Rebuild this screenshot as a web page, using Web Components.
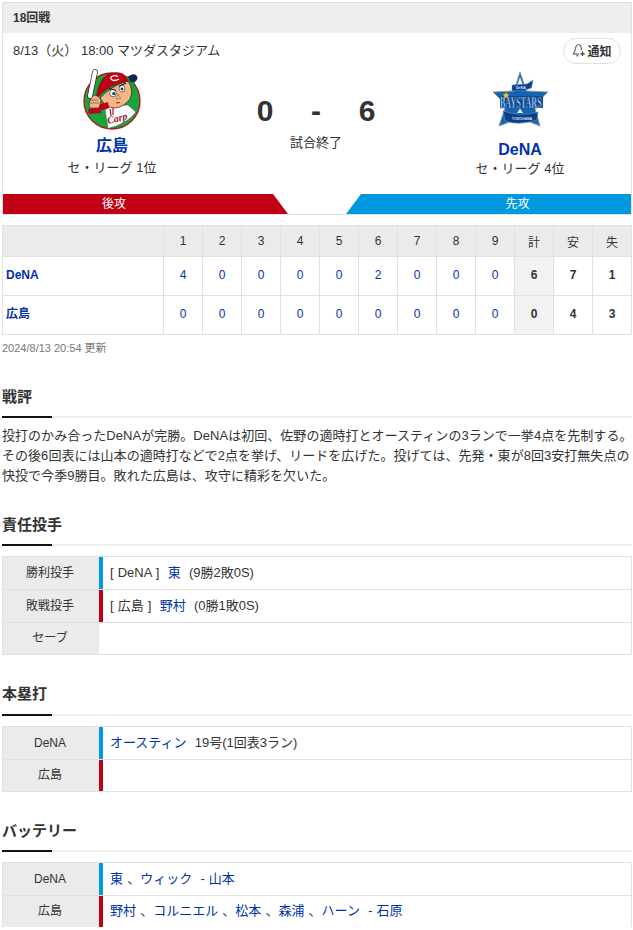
<!DOCTYPE html>
<html lang="ja">
<head>
<meta charset="utf-8">
<title>18回戦</title>
<style>
  html, body { margin: 0; padding: 0; background: #fff; }
  body {
    width: 633px;
    font-family: "Liberation Sans", Arial, "Noto Sans CJK JP", sans-serif;
    color: #333;
  }
  a { color: #0033aa; text-decoration: none; }
</style>
</head>
<body>

<game-card round="18回戦" info="8/13（火） 18:00 マツダスタジアム" status="試合終了" home-score="0" away-score="6">
  <team-side slot="home" name="広島" rank="セ・リーグ 1位">
    <svg slot="logo" width="62" height="62" viewBox="0 0 62 62">
      <circle cx="31" cy="32" r="28" fill="#14a53c" stroke="#b5121b" stroke-width="1.3"/>
      <path d="M24 41 L30 37 L47 36 L55 43 Q46 55 27 59.5 Z" fill="#fff" stroke="#444" stroke-width=".5"/>
      <path d="M29 40 L30 47 M32 39 V46" stroke="#b5121b" stroke-width="1.2" fill="none"/>
      <text transform="translate(27 55) rotate(-14)" font-size="10" font-style="italic" font-weight="bold" fill="#8e1119" font-family="Liberation Serif, serif">Carp</text>
      <path d="M43 9 L48 7 L54 11 L53 17 L48 19 L44 15 Z" fill="#14a53c" stroke="#0c6a27" stroke-width=".4"/>
      <path d="M47 8 Q51 4 55 6 Q58 9 55 12 Q52 14 49 13 Q48 10 47 8 Z" fill="#10234a"/>
      <path d="M19 29 Q30 17 47 12 Q53 21 49 30 Q42 39 33 39 Q24 38 19 29 Z" fill="#f6b587" stroke="#222" stroke-width=".7"/>
      <path d="M15 30 Q17 12 26 6 Q36 2 42 5 Q46 8 47 12 Q36 14 29 18 Q20 24 15 30 Z" fill="#c00014" stroke="#7d0b12" stroke-width=".6"/>
      <path d="M37 7.5 Q33 5.5 30 8 Q29 11 33 11.5 Q36 11.5 38 10" fill="none" stroke="#fff" stroke-width="1.3"/>
      <ellipse cx="32" cy="24" rx="3.3" ry="3.8" fill="#fff" stroke="#222" stroke-width=".6"/>
      <ellipse cx="41" cy="19.5" rx="2.9" ry="3.5" fill="#fff" stroke="#222" stroke-width=".6"/>
      <circle cx="32.8" cy="24.5" r="1.6" fill="#18336b"/>
      <circle cx="41" cy="20" r="1.4" fill="#18336b"/>
      <path d="M28 19.5 L35 21.5 M38 17.5 L45 14" stroke="#222" stroke-width="1.1"/>
      <path d="M37 25 L39.5 29.5 L35.5 30 Z" fill="#fbd6b5" stroke="#222" stroke-width=".4"/>
      <path d="M35 34 L39 33.5" stroke="#b5121b" stroke-width="1"/>
      <path d="M17 36 L27 33 L28 39 L18 42 Z" fill="#c00014"/>
      <path d="M8 35 Q9 29 13 26 Q19 27 20 32 Q19 35 18 39 L9 39 Z" fill="#f6b587" stroke="#222" stroke-width=".6"/>
      <path d="M7 40 L19 39 L20 44 L8 45 Z" fill="#c00014"/>
      <path d="M14 3 L9 27" stroke="#222" stroke-width="5.6" stroke-linecap="round"/>
      <path d="M14 3 L9 27" stroke="#fff" stroke-width="4.2" stroke-linecap="round"/>
      <path d="M9 31 H17 M9 34 H18" stroke="#7a4a30" stroke-width=".7"/>
    </svg>
  </team-side>
  <team-side slot="away" name="DeNA" rank="セ・リーグ 4位" low>
    <svg slot="logo" width="60" height="62" viewBox="0 0 60 62">
      <path d="M30 3 L36.5 22 L58 23 L44 36 L50 57 L30 49 L9 57 L16 36 L3 23 L24 22 Z" fill="#1763b0" stroke="#8e99a4" stroke-width="1"/>
      <path d="M30 8 L33.5 18 H26.5 Z" fill="#e8f3fc"/>
      <path d="M22 16 L37 15 L43 11 L41.5 19 L35 21 L22 22 Z" fill="#0b3f86" stroke="#5a9ad8" stroke-width=".5"/>
      <text x="26" y="20.3" font-size="3.6" font-weight="bold" fill="#d5e7f8">DeNA</text>
      <path d="M10 27 H53 V39 H10 Z" fill="#0d4c97"/>
      <text transform="translate(10 38.5) scale(.474 1)" font-size="17" font-weight="bold" fill="#a9cff2" stroke="#0a3874" stroke-width=".4" font-family="Liberation Serif, serif">BAYSTARS</text>
      <path d="M16 23 L17 25.3 L19.5 25.5 L17.6 27 L18.3 29.5 L16 28.2 L13.7 29.5 L14.4 27 L12.5 25.5 L15 25.3 Z" fill="#f5c518"/>
      <path d="M27 44 L30 39.5 L33 44 Z" fill="#e8f3fc"/>
      <path d="M13 42 Q30 48 48 43 L47 51 Q30 57 15 52 Z" fill="#0b3f86" stroke="#5a9ad8" stroke-width=".6"/>
      <text x="22" y="50.5" font-size="3.4" font-weight="bold" fill="#cfe3f7">YOKOHAMA</text>
    </svg>
  </team-side>
</game-card>

<score-board></score-board>
<update-note>2024/8/13 20:54 更新</update-note>

<section-block title="戦評" body-gap="8" style="margin-top:32px">
  <p-text>投打のかみ合ったDeNAが完勝。DeNAは初回、佐野の適時打とオースティンの3ランで一挙4点を先制する。その後6回表には山本の適時打などで2点を挙げ、リードを広げた。投げては、先発・東が8回3安打無失点の快投で今季9勝目。敗れた広島は、攻守に精彩を欠いた。</p-text>
</section-block>

<section-block title="責任投手" style="margin-top:29px">
  <info-table>
    <info-row label="勝利投手" team="dena">[ DeNA ]&nbsp; <a href="#">東</a>&nbsp; (9勝2敗0S)</info-row>
    <info-row label="敗戦投手" team="carp">[ 広島 ]&nbsp; <a href="#">野村</a>&nbsp; (0勝1敗0S)</info-row>
    <info-row label="セーブ"></info-row>
  </info-table>
</section-block>

<section-block title="本塁打" style="margin-top:30px; --title-pad:10px">
  <info-table>
    <info-row label="DeNA" team="dena"><a href="#">オースティン</a>&nbsp; 19号(1回表3ラン)</info-row>
    <info-row label="広島" team="carp"></info-row>
  </info-table>
</section-block>

<section-block title="バッテリー" style="margin-top:30px">
  <info-table>
    <info-row label="DeNA" team="dena"><a href="#">東</a> 、<a href="#">ウィック</a> &nbsp;- <a href="#">山本</a></info-row>
    <info-row label="広島" team="carp"><a href="#">野村</a> 、<a href="#">コルニエル</a> 、<a href="#">松本</a> 、<a href="#">森浦</a> 、<a href="#">ハーン</a> &nbsp;- <a href="#">石原</a></info-row>
  </info-table>
</section-block>

<script>
class TeamSide extends HTMLElement {
  constructor() {
    super();
    this.attachShadow({ mode: "open" });
    const low = this.hasAttribute("low");
    this.shadowRoot.innerHTML = `
      <style>
        :host { display: flex; flex-direction: column; align-items: center; width: 200px; }
        .logo { height: 62px; display: flex; justify-content: center; }
        .name { font-size: 16px; font-weight: bold; color: #0033aa; line-height: 20px; margin-top: ${low ? 9 : 5}px; }
        .rank { font-size: 13px; line-height: 20px; margin-top: ${low ? -1 : 2}px; color: #333; }
      </style>
      <div class="logo"><slot name="logo"></slot></div>
      <div class="name">${this.getAttribute("name")}</div>
      <div class="rank">${this.getAttribute("rank")}</div>`;
  }
}
customElements.define("team-side", TeamSide);

class GameCard extends HTMLElement {
  constructor() {
    super();
    this.attachShadow({ mode: "open" });
    const a = (n) => this.getAttribute(n);
    this.shadowRoot.innerHTML = `
      <style>
        :host { display: block; margin: 2px 1px 0 2px; border: 1px solid #e1e1e1; box-sizing: border-box; }
        .round { background: #eee; height: 30px; line-height: 30px; padding-left: 10px; font-size: 12px; font-weight: bold; }
        .top { display: flex; justify-content: space-between; height: 36px; padding: 5px 10px 0 10px; box-sizing: border-box; }
        .info { font-size: 13px; line-height: 25px; }
        .notify { display: flex; align-items: center; justify-content: center; gap: 1px; width: 58px; height: 26px; padding-bottom: 2px; box-sizing: border-box; border: 1px solid #e1e1e1; border-radius: 13px; font-size: 12px; font-weight: bold; }
        .match { display: flex; justify-content: space-between; padding: 0 11px 0 9px; height: 125px; box-sizing: border-box; }
        .center { flex: 1; display: flex; flex-direction: column; align-items: center; padding-top: 25px; }
        .score { display: flex; justify-content: center; width: 153px; font-size: 30px; font-weight: bold; line-height: 34px; }
        .score span { flex: 1; text-align: center; }
        .status { font-size: 13px; line-height: 18px; margin-top: 6px; }
        .sides { display: flex; justify-content: space-between; height: 20px; color: #fff; font-size: 12px; line-height: 20px; text-align: center; }
        .sides div { width: 285px; box-sizing: border-box; }
        .home { background: #c00014; clip-path: polygon(0 0, 270px 0, 100% 100%, 0 100%); padding-right: 63px; }
        .away { background: #0099e0; clip-path: polygon(15px 0, 100% 0, 100% 100%, 0 100%); padding-left: 58px; }
      </style>
      <div class="round">${a("round")}</div>
      <div class="top">
        <div class="info">${a("info")}</div>
        <div class="notify">
          <svg width="14" height="14" viewBox="0 0 14 14" fill="none" stroke="#444" stroke-width="1"><path d="M1 11 Q3 9.5 3.4 5.5 Q3.8 1.5 6.5 1.5 Q9.2 1.5 9.2 4.8 L9.4 7 M1 11 H7 M4.2 12.8 H6.4"/><path d="M10.5 8.5 V13 M8.3 10.8 H12.8" stroke-width="1.3"/></svg>
          <span>通知</span>
        </div>
      </div>
      <div class="match">
        <slot name="home"></slot>
        <div class="center">
          <div class="score"><span>${a("home-score")}</span><span>-</span><span>${a("away-score")}</span></div>
          <div class="status">${a("status")}</div>
        </div>
        <slot name="away"></slot>
      </div>
      <div class="sides"><div class="home">後攻</div><div class="away">先攻</div></div>`;
  }
}
customElements.define("game-card", GameCard);

class ScoreBoard extends HTMLElement {
  constructor() {
    super();
    this.attachShadow({ mode: "open" });
    const rows = [
      { name: "DeNA", inn: [4,0,0,0,0,2,0,0,0], tot: [6,7,1] },
      { name: "広島", inn: [0,0,0,0,0,0,0,0,0], tot: [0,4,3], cjk: true }
    ];
    const heads = [1,2,3,4,5,6,7,8,9].map((n) => `<th>${n}</th>`).join("");
    const body = rows.map((r) => `
      <tr>
        <td class="team${r.cjk ? " cjk" : ""}">${r.name}</td>
        ${r.inn.map((n) => `<td class="run">${n}</td>`).join("")}
        <td class="total">${r.tot[0]}</td><td class="sum">${r.tot[1]}</td><td class="sum">${r.tot[2]}</td>
      </tr>`).join("");
    this.shadowRoot.innerHTML = `
      <style>
        :host { display: block; margin: 10px 1px 0 2px; }
        table { width: 630px; border-collapse: collapse; table-layout: fixed; font-size: 12px; }
        th, td { border: 1px solid #e1e1e1; text-align: center; padding: 0; }
        th { background: #ebebeb; font-weight: normal; height: 30px; }
        td { height: 36px; padding-bottom: 2px; }
        .first { width: 161px; }
        .team { text-align: left; padding-left: 3px; font-weight: bold; color: #0033aa; }
        .team.cjk { height: 33px; padding-bottom: 5px; }
        .run { color: #0033aa; }
        .total { background: #f2f2f2; font-weight: bold; }
        .sum { font-weight: bold; }
      </style>
      <table>
        <colgroup><col class="first"></colgroup>
        <tr><th></th>${heads}<th>計</th><th>安</th><th>失</th></tr>
        ${body}
      </table>`;
  }
}
customElements.define("score-board", ScoreBoard);

class UpdateNote extends HTMLElement {
  constructor() {
    super();
    this.attachShadow({ mode: "open" }).innerHTML = `
      <style>:host { display: block; margin: 6px 0 0 2px; font-size: 11px; line-height: 14px; color: #777; }</style>
      <slot></slot>`;
  }
}
customElements.define("update-note", UpdateNote);

class SectionBlock extends HTMLElement {
  constructor() {
    super();
    const gap = this.getAttribute("body-gap") || 10;
    this.attachShadow({ mode: "open" }).innerHTML = `
      <style>
        :host { display: block; margin-left: 2px; margin-right: 1px; }
        h2 { margin: 0; font-size: 15px; line-height: 20px; font-weight: bold; padding-bottom: var(--title-pad, 9px); border-bottom: 2px solid #eee; position: relative; }
        h2::after { content: ""; position: absolute; left: 0; bottom: -2px; width: 50px; height: 2px; background: #111; }
        .body { margin-top: ${gap}px; }
      </style>
      <h2>${this.getAttribute("title")}</h2>
      <div class="body"><slot></slot></div>`;
  }
}
customElements.define("section-block", SectionBlock);

class PText extends HTMLElement {
  constructor() {
    super();
    this.attachShadow({ mode: "open" }).innerHTML = `
      <style>:host { display: block; margin-right: -3px; font-size: 13px; line-height: 20px; letter-spacing: .04px; }</style>
      <slot></slot>`;
  }
}
customElements.define("p-text", PText);

class InfoTable extends HTMLElement {
  constructor() {
    super();
    this.attachShadow({ mode: "open" }).innerHTML = `
      <style>:host { display: block; border: 1px solid #e1e1e1; border-bottom: 0; }</style>
      <slot></slot>`;
  }
}
customElements.define("info-table", InfoTable);

class InfoRow extends HTMLElement {
  constructor() {
    super();
    const team = this.getAttribute("team");
    const label = this.getAttribute("label");
    const color = team === "dena" ? "#0099e0" : team === "carp" ? "#c00014" : "transparent";
    // CJK glyphs sit low in the Liberation line box, lift them a little
    const lift = /^[\x00-\x7f]+$/.test(label) ? 0 : 4;
    this.attachShadow({ mode: "open" }).innerHTML = `
      <style>
        :host { display: flex; height: 33px; box-sizing: border-box; border-bottom: 1px solid #e1e1e1; font-size: 13px; word-spacing: .5px; }
        :host(:last-child) { height: 32px; margin-bottom: -1px; }
        .label { width: 96px; padding: 0 2px ${lift}px 0; box-sizing: border-box; background: #ebebeb; display: flex; align-items: center; justify-content: center; font-size: 12px; }
        .value { flex: 1; border-left: 4px solid ${color}; padding: 0 0 4px 7px; display: flex; align-items: center; white-space: pre; }
        ::slotted(a) { color: #0033aa; }
      </style>
      <div class="label">${label}</div>
      <div class="value"><span><slot></slot></span></div>`;
  }
}
customElements.define("info-row", InfoRow);
</script>
</body>
</html>
